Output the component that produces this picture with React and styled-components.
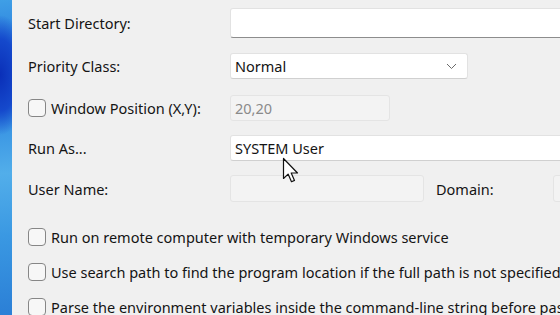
import React from "react";
import styled, { createGlobalStyle } from "styled-components";

const Global = createGlobalStyle`
  html, body {
    margin: 0;
    padding: 0;
    width: 560px;
    height: 315px;
    overflow: hidden;
    font-family: "Noto Sans", "Open Sans", sans-serif;
  }
`;

const Screen = styled.div`
  position: relative;
  display: flex;
  width: 560px;
  height: 315px;
  overflow: hidden;
`;

// bout de fond d'ecran windows a gauche
const Wallpaper = styled.div`
  flex: 0 0 12px;
  background:
    radial-gradient(ellipse 30px 60px at 0px 75px, #0a2fb8 0%, #1549cc 60%, transparent 100%),
    linear-gradient(175deg, #3f9fe6 0%, #2a7ddd 15%, #1d5fd2 24%, #2f8ae0 34%, #52aeea 55%, #3a98e2 75%, #2b7fd6 100%);
`;

const Dialog = styled.div`
  flex: 1;
  min-width: 0;
  background: #f0f0f0;
  padding: 8px 0 0 16px;
  color: #141414;
  font-size: 14.5px;
`;

const Row = styled.div`
  display: flex;
  align-items: center;
  height: ${(p) => p.h || 26}px;
  margin-bottom: ${(p) => p.mb || 0}px;
`;

const Label = styled.div`
  flex: 0 0 ${(p) => p.w || 202}px;
  display: flex;
  align-items: center;
  gap: 5px;
  white-space: nowrap;
`;

const TextBox = styled.div`
  box-sizing: border-box;
  width: ${(p) => p.w || 400}px;
  height: ${(p) => p.h || 26}px;
  flex-shrink: 0;
  display: flex;
  align-items: center;
  padding-left: 4px;
  white-space: nowrap;
  border: 1px solid ${(p) => (p.disabled ? "#e4e4e4" : "#e2e2e2")};
  border-bottom-color: ${(p) => (p.line ? "#8d8d8d" : p.disabled ? "#e4e4e4" : "#d0d0d0")};
  border-radius: 3px;
  background: ${(p) => (p.disabled ? "#f3f3f3" : "#ffffff")};
  color: ${(p) => (p.disabled ? "#8a8a8a" : "#141414")};
`;

const Select = styled(TextBox)`
  justify-content: space-between;
  padding-right: 10px;
`;

const Box = styled.span`
  box-sizing: border-box;
  display: inline-block;
  width: 18px;
  height: 18px;
  flex-shrink: 0;
  border: 1px solid #868686;
  border-radius: 4px;
  background: #f7f7f7;
`;

const CheckRow = styled.div`
  display: flex;
  align-items: center;
  gap: 5px;
  height: 20px;
  margin-bottom: 15px;
  white-space: nowrap;
`;

const Inline = styled.span`
  flex: 0 0 auto;
  margin-left: 12px;
  width: 117px;
`;

const Pointer = styled.svg`
  position: absolute;
  left: 282px;
  top: 157px;
`;

const Chevron = () => (
  <svg width="11" height="7" viewBox="0 0 11 7">
    <path d="M1 1l4.5 4.5L10 1" fill="none" stroke="#6a6a6a" strokeWidth="1" />
  </svg>
);

export default function App() {
  return (
    <Screen>
      <Global />
      <Wallpaper />
      <Dialog>
        <Row h={30} mb={15}>
          <Label>Start Directory:</Label>
          <TextBox h={30} line />
        </Row>
        <Row h={26} mb={16}>
          <Label>Priority Class:</Label>
          <Select w={238}>
            Normal
            <Chevron />
          </Select>
        </Row>
        <Row h={26} mb={14}>
          <Label>
            <Box />
            Window Position (X,Y):
          </Label>
          <TextBox w={160} disabled>
            20,20
          </TextBox>
        </Row>
        <Row h={26} mb={14}>
          <Label>Run As...</Label>
          <TextBox>SYSTEM User</TextBox>
        </Row>
        <Row h={27} mb={25}>
          <Label>User Name:</Label>
          <TextBox w={194} h={27} disabled />
          <Inline>Domain:</Inline>
          <TextBox w={60} h={27} disabled />
        </Row>
        <CheckRow>
          <Box />
          Run on remote computer with temporary Windows service
        </CheckRow>
        <CheckRow>
          <Box />
          Use search path to find the program location if the full path is not specified
        </CheckRow>
        <CheckRow>
          <Box />
          Parse the environment variables inside the command-line string before passing
        </CheckRow>
      </Dialog>
      <Pointer width="17" height="27" viewBox="0 0 17 27">
        <path
          d="M1.5 1.5v20l4.6-4.4 3.4 7.6 3-1.3-3.3-7.4h6.3z"
          fill="#ffffff"
          stroke="#111"
          strokeWidth="1.2"
          strokeLinejoin="round"
        />
      </Pointer>
    </Screen>
  );
}
